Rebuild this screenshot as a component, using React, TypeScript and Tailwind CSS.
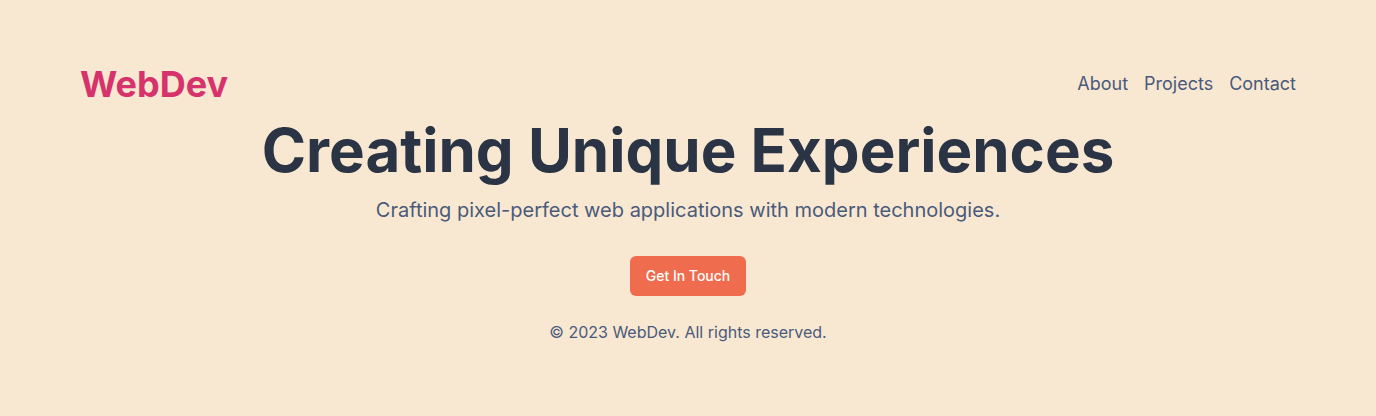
const App = () => {
  return (
    <div
      className="min-h-screen w-full bg-[#f8e8d2] px-20 pt-16 pb-16"
      style={{ fontFamily: "Inter, 'Noto Sans', sans-serif" }}
    >
      <header className="flex items-center justify-between">
        <div className="text-4xl font-bold text-[#d6336c]">WebDev</div>
        <nav className="flex items-center gap-4 text-lg text-[#4a5a7a]">
          <a href="#about">About</a>
          <a href="#projects">Projects</a>
          <a href="#contact">Contact</a>
        </nav>
      </header>
      <main className="mt-4 flex flex-col items-center text-center">
        <h1 className="text-6xl font-bold text-[#2a3444]">
          Creating Unique Experiences
        </h1>
        <p className="mt-4 text-xl text-[#4a5a7a]">
          Crafting pixel-perfect web applications with modern technologies.
        </p>
        <a
          href="#contact"
          className="mt-8 rounded-md bg-[#f06c4e] px-4 py-2.5 text-sm font-medium text-white"
        >
          Get In Touch
        </a>
      </main>
      <footer className="mt-6 text-center text-base text-[#4a5a7a]">
        © 2023 WebDev. All rights reserved.
      </footer>
    </div>
  );
};

export default App;
